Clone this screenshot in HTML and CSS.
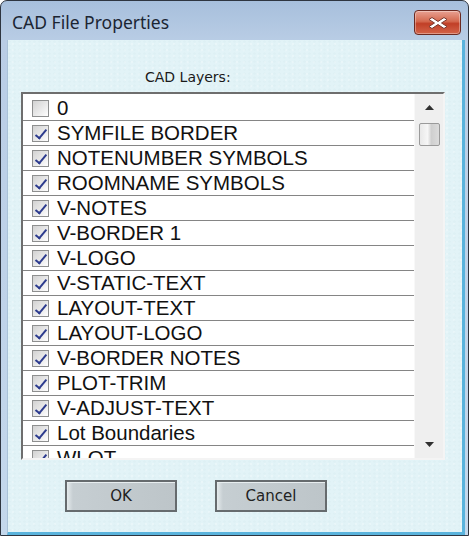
FILE: index.html
```html
<!DOCTYPE html>
<html>
<head>
<meta charset="utf-8">
<link rel="stylesheet" href="styles.css">
</head>
<body>
<div class="window">
  <div class="titlebar">
    <span class="title">CAD File Properties</span>
    <div class="close">
      <svg width="22" height="14" viewBox="0 0 22 14">
        <path d="M5 1.5 L11 5.5 L17 1.5 L20 3.5 L14.5 7 L20 10.5 L17 12.5 L11 8.5 L5 12.5 L2 10.5 L7.5 7 L2 3.5 Z" fill="#ffffff" stroke="#7a3a30" stroke-width="1"/>
      </svg>
    </div>
  </div>
  <div class="client">
    <div class="label">CAD Layers:</div>
    <div class="listbox">
      <div class="rows">
        <div class="row"><span class="cb"></span><span class="name">0</span></div>
        <div class="row"><span class="cb checked"></span><span class="name">SYMFILE BORDER</span></div>
        <div class="row"><span class="cb checked"></span><span class="name">NOTENUMBER SYMBOLS</span></div>
        <div class="row"><span class="cb checked"></span><span class="name">ROOMNAME SYMBOLS</span></div>
        <div class="row"><span class="cb checked"></span><span class="name">V-NOTES</span></div>
        <div class="row"><span class="cb checked"></span><span class="name">V-BORDER 1</span></div>
        <div class="row"><span class="cb checked"></span><span class="name">V-LOGO</span></div>
        <div class="row"><span class="cb checked"></span><span class="name">V-STATIC-TEXT</span></div>
        <div class="row"><span class="cb checked"></span><span class="name">LAYOUT-TEXT</span></div>
        <div class="row"><span class="cb checked"></span><span class="name">LAYOUT-LOGO</span></div>
        <div class="row"><span class="cb checked"></span><span class="name">V-BORDER NOTES</span></div>
        <div class="row"><span class="cb checked"></span><span class="name">PLOT-TRIM</span></div>
        <div class="row"><span class="cb checked"></span><span class="name">V-ADJUST-TEXT</span></div>
        <div class="row"><span class="cb checked"></span><span class="name">Lot Boundaries</span></div>
        <div class="row"><span class="cb checked"></span><span class="name">WLOT</span></div>
      </div>
      <div class="scrollbar">
        <div class="arrow"><svg width="9" height="5" viewBox="0 0 9 5"><path d="M0 5 L4.5 0 L9 5 Z" fill="#303030"/></svg></div>
        <div class="track"><div class="thumb"></div></div>
        <div class="arrow"><svg width="9" height="5" viewBox="0 0 9 5"><path d="M0 0 L4.5 5 L9 0 Z" fill="#303030"/></svg></div>
      </div>
    </div>
    <div class="buttons">
      <div class="btn">OK</div>
      <div class="btn">Cancel</div>
    </div>
  </div>
</div>
</body>
</html>
```
FILE: styles.css
```css
html, body {
  margin: 0;
  padding: 0;
  background: #ffffff;
}
.window {
  width: 469px;
  height: 536px;
  box-sizing: border-box;
  border: 1px solid #2e3540;
  border-radius: 7px 7px 0 0;
  background: linear-gradient(#a7bfdc, #b9cde5 40px, #c4d8ec);
  display: flex;
  flex-direction: column;
  overflow: hidden;
}
.titlebar {
  height: 39px;
  display: flex;
  align-items: flex-start;
  justify-content: space-between;
  padding: 0 7px 0 11px;
  box-sizing: border-box;
  flex: none;
}
.title {
  font-family: "Noto Sans", sans-serif;
  font-size: 17.5px;
  color: #1b2533;
  margin-top: 9px;
}
.close {
  margin-top: 9px;
  width: 47px;
  height: 25px;
  box-sizing: border-box;
  border: 1px solid #6b2a22;
  border-radius: 4px;
  background: linear-gradient(#e8a192, #d4694f 45%, #c13f27 55%, #d3644a);
  display: flex;
  align-items: center;
  justify-content: center;
  box-shadow: inset 0 0 0 1px rgba(255,255,255,0.35);
}
.client {
  flex: 1;
  margin: 0 3px 0 6px;
  border-left: 1px solid #a9c2d8;
  border-right: 3px solid #5ab3dc;
  border-bottom: 3px solid #5ab3dc;
  background-color: #e2f3f7;
  background-image:
    radial-gradient(circle at 30% 40%, rgba(205,228,234,0.18) 1px, transparent 1.5px),
    radial-gradient(circle at 70% 70%, rgba(255,255,255,0.25) 1px, transparent 1.5px);
  background-size: 5px 4px, 7px 6px;
  display: flex;
  flex-direction: column;
  align-items: flex-start;
}
.label {
  font-family: "DejaVu Sans", sans-serif;
  font-size: 14px;
  color: #1a1a1a;
  margin: 29px 0 0 137px;
  height: 23px;
}
.listbox {
  margin-left: 13px;
  width: 424px;
  height: 368px;
  box-sizing: border-box;
  border-top: 2px solid #6e6e6e;
  border-left: 2px solid #6e6e6e;
  border-right: 2px solid #f4f4f4;
  border-bottom: 2px solid #f4f4f4;
  background: #ffffff;
  display: flex;
  overflow: hidden;
}
.rows {
  flex: 1;
  padding-top: 2px;
  overflow: hidden;
}
.row {
  height: 24px;
  border-bottom: 1px solid #858585;
  display: flex;
  align-items: center;
}
.cb {
  width: 17px;
  height: 17px;
  box-sizing: border-box;
  border: 1px solid #8e8f8f;
  background: linear-gradient(135deg, #d2d2d2, #f0f0f0 70%, #ffffff);
  margin-left: 9px;
  margin-right: 8px;
  position: relative;
  flex: none;
}
.cb.checked::after {
  content: "";
  position: absolute;
  left: 5px;
  top: 1px;
  width: 4px;
  height: 10px;
  border-right: 2px solid #2c3b8e;
  border-bottom: 2px solid #2c3b8e;
  transform: rotate(40deg);
}
.name {
  font-family: "Liberation Sans", Arial, sans-serif;
  font-size: 20.5px;
  color: #111111;
  white-space: nowrap;
}
.scrollbar {
  width: 28px;
  flex: none;
  background: #efefef;
  border-left: 1px solid #f8f8f8;
  display: flex;
  flex-direction: column;
  align-items: center;
}
.arrow {
  height: 27px;
  width: 100%;
  display: flex;
  align-items: center;
  justify-content: center;
}
.track {
  flex: 1;
  width: 100%;
}
.thumb {
  margin: 2px auto 0 auto;
  width: 21px;
  height: 23px;
  box-sizing: border-box;
  border: 1px solid #9a9a9a;
  border-radius: 2px;
  background: linear-gradient(90deg, #e8e8e8, #f6f6f6 40%, #cfcfcf 60%, #dcdcdc);
}
.buttons {
  display: flex;
  gap: 38px;
  margin: 20px 0 0 57px;
}
.btn {
  width: 112px;
  height: 32px;
  box-sizing: border-box;
  border: 2px solid #666b6e;
  background: linear-gradient(90deg, #e4eaec 0, #c6ced2 6px, #bdc5c9 100%);
  box-shadow: inset 0 1px 0 #e8eef0;
  display: flex;
  align-items: center;
  justify-content: center;
  font-family: "DejaVu Sans", sans-serif;
  font-size: 15px;
  color: #222222;
}
```
